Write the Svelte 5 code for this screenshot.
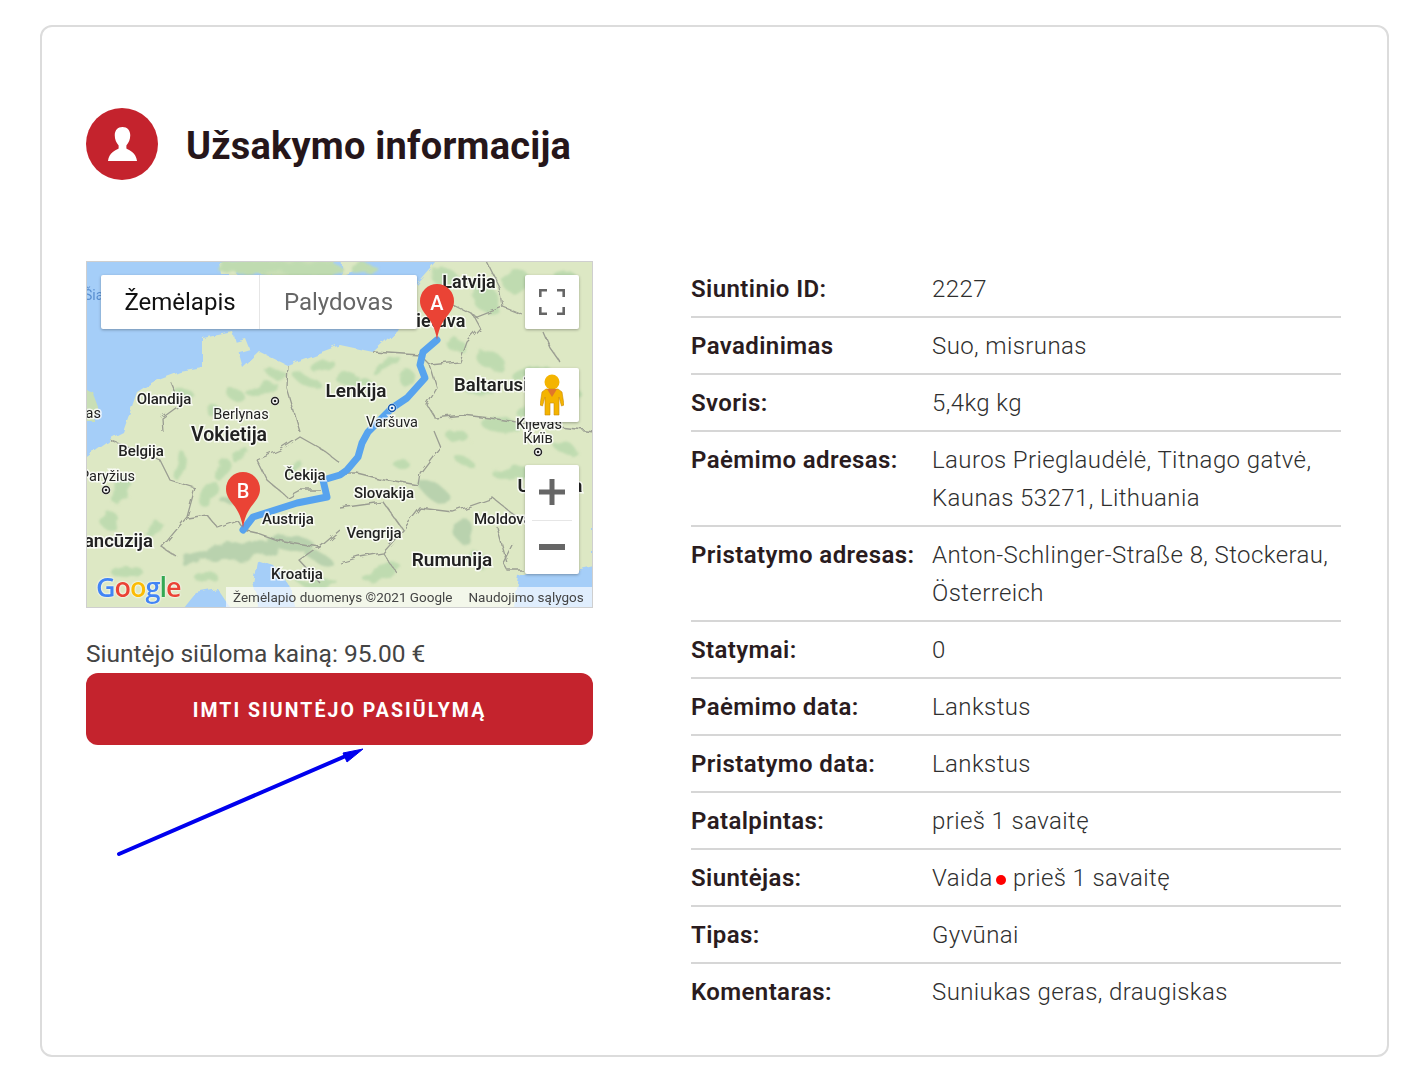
<script>
	const rows = [
		{ label: 'Siuntinio ID:', value: '2227' },
		{ label: 'Pavadinimas', value: 'Suo, misrunas' },
		{ label: 'Svoris:', value: '5,4kg kg' },
		{ label: 'Paėmimo adresas:', value: 'Lauros Prieglaudėlė, Titnago gatvė, Kaunas 53271, Lithuania' },
		{ label: 'Pristatymo adresas:', value: 'Anton-Schlinger-Straße 8, Stockerau, Österreich' },
		{ label: 'Statymai:', value: '0' },
		{ label: 'Paėmimo data:', value: 'Lankstus' },
		{ label: 'Pristatymo data:', value: 'Lankstus' },
		{ label: 'Patalpintas:', value: 'prieš 1 savaitę' },
		{ label: 'Siuntėjas:', value: 'Vaida', dot: 'prieš 1 savaitę' },
		{ label: 'Tipas:', value: 'Gyvūnai' },
		{ label: 'Komentaras:', value: 'Suniukas geras, draugiskas' }
	];

	// map labels, coordinates are relative to the map's top left corner
	const labels = [
		{ t: 'Latvija', x: 383, y: 27, s: 18, w: 600 },
		{ t: 'Lietuva', x: 350, y: 66, s: 18, w: 600 },
		{ t: 'Lenkija', x: 270, y: 136, s: 19, w: 600 },
		{ t: 'Baltarusija', x: 368, y: 130, s: 18.500, w: 600, a: 'start' },
		{ t: 'Olandija', x: 78, y: 143, s: 15, w: 500 },
		{ t: 'Berlynas', x: 155, y: 158, s: 14.500, w: 400 },
		{ t: 'Vokietija', x: 143, y: 180, s: 19.500, w: 600 },
		{ t: 'Belgija', x: 55, y: 195, s: 15, w: 500 },
		{ t: 'Londonas', x: 15, y: 157, s: 14.500, w: 400, a: 'end' },
		{ t: 'Varšuva', x: 306, y: 166, s: 14.500, w: 400 },
		{ t: 'Kijevas', x: 453, y: 168, s: 14.500, w: 400 },
		{ t: 'Київ', x: 452, y: 182, s: 14.500, w: 400 },
		{ t: 'Paryžius', x: 49, y: 220, s: 14.500, w: 400, a: 'end' },
		{ t: 'Prancūzija', x: 67, y: 286, s: 18.500, w: 600, a: 'end' },
		{ t: 'Čekija', x: 219, y: 219, s: 15, w: 500 },
		{ t: 'Slovakija', x: 298, y: 237, s: 15, w: 500 },
		{ t: 'Austrija', x: 202, y: 263, s: 15, w: 500 },
		{ t: 'Vengrija', x: 288, y: 277, s: 15, w: 500 },
		{ t: 'Moldova', x: 388, y: 263, s: 15, w: 500, a: 'start' },
		{ t: 'Ukraina', x: 464, y: 231, s: 19, w: 600 },
		{ t: 'Rumunija', x: 366, y: 305, s: 19, w: 600 },
		{ t: 'Kroatija', x: 211, y: 318, s: 15, w: 500 }
	];

	const cities = [
		[189, 140],
		[306, 147],
		[20, 229],
		[452, 191]
	];

	// [cx, cy, rx, ry, rotation] of the soft green patches
	const woods = [
		[170, 6, 40, 7, 0], [225, 8, 32, 8, 0], [278, 8, 14, 5, 0],
		[236, 104, 12, 5, -20], [222, 120, 14, 5, 20], [262, 118, 11, 5, -10], [176, 128, 16, 5, -20],
		[190, 112, 10, 5, 10], [150, 134, 12, 6, 30], [128, 150, 8, 5, 0], [98, 132, 10, 4, 10],
		[300, 104, 16, 5, -30], [322, 118, 8, 9, 0], [280, 122, 8, 4, 20], [360, 18, 14, 10, 20],
		[400, 38, 16, 12, 40], [430, 20, 14, 12, 0], [478, 24, 16, 12, -20], [370, 84, 9, 6, 0],
		[405, 100, 14, 9, 20], [445, 112, 20, 7, -10], [392, 128, 14, 6, 0], [480, 128, 16, 6, 20],
		[415, 165, 20, 8, 10], [372, 176, 12, 6, 10], [440, 150, 10, 5, -20], [478, 186, 12, 6, 20],
		[428, 212, 20, 6, -10], [378, 200, 10, 4, 20], [314, 202, 8, 4, 0], [206, 205, 10, 4, -30],
		[36, 228, 8, 16, 30], [94, 205, 6, 14, 15], [24, 260, 10, 8, 0], [136, 208, 7, 12, 20],
		[155, 195, 10, 4, -30], [122, 232, 8, 14, 30], [68, 268, 10, 5, -30], [296, 312, 20, 7, -20],
		[232, 322, 20, 4, 0], [390, 298, 10, 8, 20], [120, 316, 12, 5, 0], [40, 310, 16, 6, 0]
	];

	// darker ground: alps and carpathians
	const hills = [
		[152, 290, 42, 9, -6], [205, 282, 24, 8, 8], [105, 298, 10, 5, -30], [350, 232, 20, 8, 35],
		[378, 270, 10, 14, -20], [232, 296, 14, 5, 20], [148, 240, 12, 4, -10]
	];

	const borders = [
		'M202 104L201 127L214 171',
		'M94 144L76 157L77 171',
		'M24 179L74 199L84 219L109 227L101 256L76 286L91 296',
		'M101 257L121 254L131 266L151 259L157 267',
		'M171 199L194 189L214 176L237 189L254 202',
		'M171 199L181 219L201 236L214 229L234 229',
		'M157 269L171 272L191 279L234 286L254 269',
		'M254 212L271 212L291 217L332 224',
		'M254 247L297 241L317 269L334 247L367 251L407 237L431 256',
		'M332 224L334 212L354 186L347 169',
		'M344 104L351 127L341 144L349 157L377 154L404 157L431 161L507 170',
		'M287 91L334 94L344 104',
		'M344 104L374 101L381 81L394 67L387 54',
		'M367 44L391 56L417 46L437 54',
		'M417 46L414 27L401 1',
		'M457 71L464 87L474 101',
		'M427 282L417 302L421 309L437 309',
		'M411 266L421 302',
		'M317 269L297 292L274 296L254 302',
		'M297 292L311 312',
		'M234 286L214 300L234 322',
		'M94 144L84 120'
	];
</script>

<div class="card">
	<header class="head">
		<span class="avatar">
			<svg viewBox="0 0 32 36" width="31" height="35" aria-hidden="true">
				<path fill="#fff" d="M16 0c5 0 8 3.500 8 8.500 0 4-1.600 8-4 10.500v3c3 2 10 4 11 13H1c1-9 8-11 11-13v-3c-2.400-2.500-4-6.500-4-10.500C8 3.500 11 0 16 0z" />
			</svg>
		</span>
		<h1>Užsakymo informacija</h1>
	</header>

	<div class="cols">
		<div class="left">
			<div class="map">
				<svg class="map-art" viewBox="0 0 507 346" width="507" height="346" aria-hidden="true">
					<defs>
						<filter id="wiggle" x="-5%" y="-5%" width="110%" height="110%">
							<feTurbulence type="fractalNoise" baseFrequency="0.09" numOctaves="2" seed="4" />
							<feDisplacementMap in="SourceGraphic" scale="7" />
						</filter>
						<filter id="soft" x="-5%" y="-5%" width="110%" height="110%">
							<feTurbulence type="fractalNoise" baseFrequency="0.06" numOctaves="2" seed="9" />
							<feDisplacementMap in="SourceGraphic" scale="12" />
							<feGaussianBlur stdDeviation="0.8" />
						</filter>
					</defs>
					<rect width="507" height="346" fill="#a5cef8" />
					<!-- mainland -->
					<g filter="url(#wiggle)">
						<path fill="#dde8c4" d="M507 -6V352H-6V199L27 176L37 171L51 131L67 121L94 111L117 107L117 77L147 71L157 107L174 91L201 104L254 84L287 91L311 69L331 24L357 -6z" />
						<path fill="#c9dfb6" d="M160 -6H254L240 10L205 16L172 12z" />
						<path fill="#dde8c4" d="M134 2L152 2L150 14L136 14z" />
						<path fill="#dde8c4" d="M254 -6H274L268 10L256 14z" />
						<path fill="#c9dfb6" d="M-6 126L6 130L12 146L8 160L-6 160z" />
						<path fill="#dde8c4" d="M145 82L160 78L164 88L150 92z" />
						<!-- seas over the land -->
						<path fill="#a5cef8" d="M427 352L433 316L453 308L477 312L512 304V352z" />
						<path fill="#a5cef8" d="M171 300L189 306L203 324L211 352H175L167 322z" />
						<path fill="#a5cef8" d="M94 352L110 332L132 328L148 352z" />
					</g>
					<g filter="url(#soft)">
						{#each hills as h}
							<ellipse cx={h[0]} cy={h[1]} rx={h[2]} ry={h[3]} transform="rotate({h[4]} {h[0]} {h[1]})" fill="#b9d2ae" />
						{/each}
						{#each woods as h}
							<ellipse cx={h[0]} cy={h[1]} rx={h[2]} ry={h[3]} transform="rotate({h[4]} {h[0]} {h[1]})" fill="#bfdbb0" />
						{/each}
					</g>
					<g filter="url(#wiggle)">
						{#each borders as d}
							<path {d} fill="none" stroke="#9a9d92" stroke-width="1.300" />
						{/each}
					</g>
					<polyline
						points="351,79 337,91 334,104 339,117 321,137 306,147 282,171 276,182 272,196 261,209 254,214 237,219 241,236 211,242 167,256 157,269"
						fill="none"
						stroke="#57a3ee"
						stroke-width="7"
						stroke-linejoin="round"
						stroke-linecap="round"
					/>
					{#each labels as l}
						<text class="lbl" x={l.x} y={l.y} font-size={l.s} font-weight={l.w} text-anchor={l.a ?? 'middle'}>{l.t}</text>
					{/each}
					<text class="sea" x="-2" y="39" font-size="14">Šiaurės jūra</text>
					{#each cities as c}
						<circle cx={c[0]} cy={c[1]} r="4.500" fill="#fff" />
						<circle cx={c[0]} cy={c[1]} r="3.500" fill="none" stroke={c[0] === 306 ? '#1558a8' : '#222'} stroke-width="1.500" />
						<circle cx={c[0]} cy={c[1]} r="1.300" fill={c[0] === 306 ? '#1558a8' : '#222'} />
					{/each}
					<g class="pin">
						<path fill="#ea4335" d="M351 79c-2-14-7-20-11-25-3-4-6-8-6-14a17 17 0 0 1 34 0c0 6-3 10-6 14-4 5-9 11-11 25z" />
						<text x="351" y="49" font-size="20">A</text>
					</g>
					<g class="pin">
						<path fill="#ea4335" d="M157 267c-2-14-7-20-11-25-3-4-6-8-6-14a17 17 0 0 1 34 0c0 6-3 10-6 14-4 5-9 11-11 25z" />
						<text x="157" y="237" font-size="20">B</text>
					</g>
				</svg>

				<div class="tabs">
					<span class="tab active">Žemėlapis</span>
					<span class="tab">Palydovas</span>
				</div>
				<button class="ctl full" aria-label="Visas ekranas">
					<svg viewBox="0 0 26 26" width="26" height="26">
						<path fill="none" stroke="#666" stroke-width="2.600" d="M1.300 8V1.300H8M18 1.300h6.700V8M24.700 18v6.700H18M8 24.700H1.300V18" />
					</svg>
				</button>
				<button class="ctl peg" aria-label="Street View">
					<svg viewBox="0 0 24 42" width="24" height="42">
						<circle cx="12" cy="8" r="7.500" fill="#f4b400" />
						<path fill="#f4b400" stroke="#c98a0a" stroke-width="0.600" d="M6 15h12l4 3 2 13-2.500 1L19 23v18h-5V29h-4v12H5V23l-2.500 9L0 31l2-13z" />
						<path fill="#e0762b" d="M7 15h10l-5 8z" />
					</svg>
				</button>
				<div class="ctl zoom">
					<svg viewBox="0 0 26 26" width="26" height="26" aria-hidden="true">
						<path fill="#666" d="M10.500 0h5v10.500H26v5H15.500V26h-5V15.500H0v-5h10.500z" />
					</svg>
					<span class="zoom-sep"></span>
					<svg viewBox="0 0 26 6" width="26" height="6" aria-hidden="true">
						<rect width="26" height="6" fill="#666" />
					</svg>
				</div>
				<div class="google"><i class="b">G</i><i class="r">o</i><i class="y">o</i><i class="b">g</i><i class="g">l</i><i class="r">e</i></div>
				<div class="attr">
					<span>Žemėlapio duomenys ©2021 Google</span>
					<span>Naudojimo sąlygos</span>
				</div>
			</div>

			<p class="price">Siuntėjo siūloma kainą: 95.00 €</p>
			<button class="offer">Imti siuntėjo pasiūlymą</button>

			<svg class="arrow" viewBox="0 0 260 120" width="260" height="120" aria-hidden="true">
				<path d="M7 113 L236 14" fill="none" stroke="#0000ee" stroke-width="4" stroke-linecap="round" />
				<path d="M251 8 L231 12 L235 21z" fill="#0000ee" stroke="#0000ee" stroke-width="1" />
			</svg>
		</div>

		<div class="info">
			{#each rows as r}
				<div class="row">
					<div class="k">{r.label}</div>
					<div class="v">
						{r.value}
						{#if r.dot}
							<span class="dot"></span>{r.dot}
						{/if}
					</div>
				</div>
			{/each}
		</div>
	</div>
</div>

<style>
	:global(body) {
		background: #fff;
		font-family: Roboto, 'Liberation Sans', sans-serif;
		color: #333;
	}

	.card {
		box-sizing: border-box;
		width: 1349px;
		height: 1032px;
		margin: 25px 0 0 40px;
		padding: 81px 46px 0 44px;
		border: 2px solid #dcdcdc;
		border-radius: 12px;
	}

	.head {
		display: flex;
		align-items: center;
		gap: 28px;
		height: 72px;
		margin-bottom: 81px;
	}

	.avatar {
		display: flex;
		align-items: center;
		justify-content: center;
		width: 72px;
		height: 72px;
		border-radius: 50%;
		background: #c4232d;
	}

	h1 {
		margin: 0;
		padding-top: 3px;
		font-size: 38px;
		font-weight: 700;
		letter-spacing: 0.2px;
		color: #26161a;
	}

	.cols {
		display: flex;
		gap: 98px;
	}

	.left {
		position: relative;
		width: 507px;
		flex: none;
	}

	.map {
		position: relative;
		box-sizing: border-box;
		width: 507px;
		height: 347px;
		overflow: hidden;
		border: 1px solid #cfcfcf;
	}

	.map-art {
		display: block;
		margin: -1px;
	}

	.lbl {
		fill: #222;
		stroke: #fff;
		stroke-width: 3px;
		stroke-opacity: 0.8;
		paint-order: stroke;
		font-family: Roboto, sans-serif;
	}

	.sea {
		fill: #5a8fd0;
		font-family: Roboto, sans-serif;
	}

	.pin text {
		fill: #fff;
		text-anchor: middle;
		font-family: Roboto, sans-serif;
		font-weight: 500;
	}

	.tabs {
		position: absolute;
		left: 14px;
		top: 13px;
		display: flex;
		height: 54px;
		background: #fff;
		border-radius: 2px;
		box-shadow: 0 1px 3px rgba(0, 0, 0, 0.3);
	}

	.tab {
		display: flex;
		align-items: center;
		justify-content: center;
		width: 157px;
		font-size: 24px;
		color: #666;
	}

	.tab.active {
		box-sizing: border-box;
		width: 159px;
		color: #111;
		border-right: 1px solid #e6e6e6;
	}

	.ctl {
		position: absolute;
		left: 438px;
		display: flex;
		align-items: center;
		justify-content: center;
		width: 54px;
		padding: 0;
		border: 0;
		background: #fff;
		border-radius: 2px;
		box-shadow: 0 1px 3px rgba(0, 0, 0, 0.3);
	}

	.full {
		top: 13px;
		height: 54px;
	}

	.peg {
		top: 106px;
		height: 54px;
	}

	.zoom {
		top: 203px;
		box-sizing: border-box;
		height: 109px;
		padding-top: 14px;
		flex-direction: column;
		justify-content: flex-start;
	}

	.zoom-sep {
		width: 40px;
		height: 1px;
		margin: 15px 0 23px;
		background: #e6e6e6;
	}

	.google {
		position: absolute;
		left: 9px;
		bottom: 1px;
		font-family: 'Open Sans', sans-serif;
		font-size: 27px;
		font-weight: 600;
		line-height: 38px;
		letter-spacing: -1px;
		text-shadow: 0 0 2px #fff, 0 0 2px #fff;
	}

	.google i {
		font-style: normal;
	}

	.b { color: #4285f4; }
	.r { color: #ea4335; }
	.y { color: #fbbc05; }
	.g { color: #34a853; }

	.attr {
		position: absolute;
		right: 0;
		bottom: 0;
		display: flex;
		gap: 16px;
		box-sizing: border-box;
		width: 366px;
		height: 20px;
		padding: 0 9px 0 7px;
		background: rgba(255, 255, 255, 0.65);
		font-size: 13.500px;
		line-height: 20px;
		color: #444;
		white-space: nowrap;
	}

	.price {
		margin: 27px 0 0;
		font-size: 24.500px;
		font-weight: 400;
		line-height: 38px;
		color: #444;
	}

	.offer {
		display: block;
		width: 507px;
		height: 72px;
		padding: 2px 0 0;
		border: 0;
		border-radius: 12px;
		background: #c4232d;
		color: #fff;
		font-family: inherit;
		font-size: 19.500px;
		font-weight: 700;
		letter-spacing: 2.050px;
		text-transform: uppercase;
	}

	.arrow {
		position: absolute;
		left: 26px;
		top: 480px;
	}

	.info {
		width: 650px;
		flex: none;
	}

	.row {
		display: grid;
		grid-template-columns: 241px 1fr;
		padding: 9px 0 8px;
		border-bottom: 2px solid #d6d6d6;
		font-size: 24px;
		line-height: 38px;
	}

	.row:last-child {
		border-bottom: 0;
	}

	.k {
		font-weight: 600;
		letter-spacing: 0.4px;
		color: #2a1c1e;
	}

	.v {
		font-weight: 300;
		letter-spacing: 0.4px;
		color: #2f2f2f;
	}

	.dot {
		display: inline-block;
		width: 10px;
		height: 10px;
		margin: 0 7px 0 -3px;
		border-radius: 50%;
		background: #f00;
		vertical-align: 1px;
	}
</style>
